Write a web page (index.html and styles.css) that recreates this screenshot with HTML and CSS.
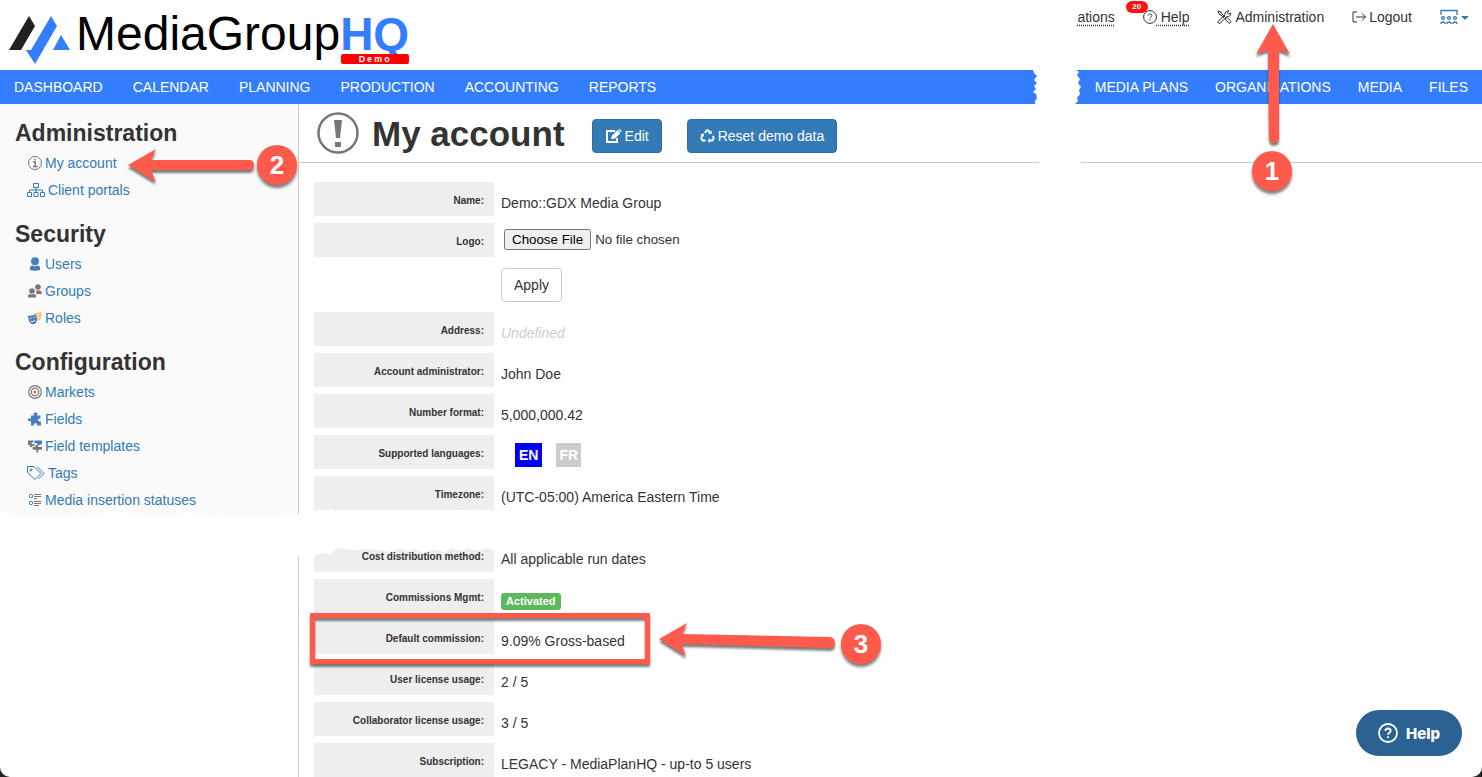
FILE: index.html
```html
<!DOCTYPE html>
<html lang="en">
<head>
  <meta charset="UTF-8">
  <meta name="viewport" content="width=device-width, initial-scale=1.0">
  <title>MediaGroupHQ | My account</title>
  <link rel="stylesheet" href="styles.css">
</head>
<body>
<div class="page">

<header class="top">
  <a href="#" class="logo">
    <svg width="62" height="50" viewBox="0 0 62 50">
      <path d="M0 35 L20 1 L26 11 L12 35Z" fill="#231f20"/>
      <path d="M17 35 L22 35 L42 1 L48 11 L26 49Z" fill="#347dff"/>
      <path d="M44 35 L52 20 L61 35Z" fill="#347dff"/>
    </svg>
    <span class="logo-text">MediaGroup</span>
    <span class="logo-hq">HQ<span class="logo-demo">Demo</span></span>
  </a>
  <nav class="user-nav">
    <a href="#" class="dotted">ations</a>
    <a href="#" class="help-link">
      <span class="count">20</span>
      <svg width="14" height="14" viewBox="0 0 14 14" fill="none" stroke="#333"><circle cx="7" cy="7" r="6.4"/><path d="M5.2 5.6C5.2 3.4 8.9 3.4 8.9 5.5C8.9 6.9 7 6.8 7 8.3M7 9.4V10.6"/></svg><span class="dotted">&nbsp;Help</span>
    </a>
    <a href="#">
      <svg width="15" height="14" viewBox="0 0 15 14" fill="none" stroke="#333"><path d="M1 1L4 2L5 4L8 7M1 1L2 4L4 5L7 8M8.5 8L10 7.500L14 11.500L12.500 13.400L8.500 10Z"/><path d="M1 11.500L8 5C7.500 2 9.500.6 12 1L10.300 2.800L11.500 4.200L13.800 3C14.300 5.500 12 7.200 9.800 6.500L3 13.300C1.500 13.700.5 12.700 1 11.500Z"/></svg>
      Administration
    </a>
    <a href="#">
      <svg width="14" height="14" viewBox="0 0 14 14" fill="none" stroke="#333"><path d="M5 2H1V12H5M4 7H13.500M10 3.500L13.500 7L10 10.500"/></svg>
      Logout
    </a>
    <a href="#" aria-label="Switch account">
      <svg width="30" height="16" viewBox="0 0 30 16" fill="none" stroke="#337ab7" stroke-width="1.300"><path d="M1 6V1.500H17V6"/><circle cx="3" cy="9" r="1.400"/><circle cx="9" cy="9" r="1.400"/><circle cx="15" cy="9" r="1.400"/><path d="M1 15V14Q3 12 5 14V15M7 15V14Q9 12 11 14V15M13 15V14Q15 12 17 14V15"/><path d="M21 7H29L25 11Z" fill="#337ab7" stroke="none"/></svg>
    </a>
  </nav>
</header>

<nav class="main-nav">
  <div class="nav-left">
    <a href="#">DASHBOARD</a>
    <a href="#">CALENDAR</a>
    <a href="#">PLANNING</a>
    <a href="#">PRODUCTION</a>
    <a href="#">ACCOUNTING</a>
    <a href="#">REPORTS</a>
  </div>
  <div class="nav-right">
    <a href="#">MEDIA PLANS</a>
    <a href="#">ORGANISATIONS</a>
    <a href="#">MEDIA</a>
    <a href="#">FILES</a>
  </div>
</nav>

<div class="layout">
  <aside class="sidebar">
    <div class="menu">
      <h2>Administration</h2>
      <ul>
        <li><a href="#"><svg width="14" height="14" viewBox="0 0 14 14" fill="none" stroke="#777"><circle cx="7" cy="7" r="6.500"/><path d="M5 6H7.300V10.500M5 10.500H9.500" stroke-width="1.400"/><path d="M6.200 3.500H7.800" stroke-width="1.600"/></svg>My account</a></li>
        <li><a href="#" class="wide"><svg width="18" height="14" viewBox="0 0 18 14" fill="none" stroke="#337ab7"><path d="M6.500.5H11.500V4.500H6.500ZM.5 9.500H4.500V13.500H.5ZM7 9.500H11V13.500H7ZM13.500 9.500H17.500V13.500H13.500ZM9 4.500V9.500M2.500 9.500V7H15.500V9.500"/></svg>Client portals</a></li>
      </ul>
      <h2>Security</h2>
      <ul>
        <li><a href="#"><svg width="14" height="14" viewBox="0 0 14 14" fill="#4a7ebb"><circle cx="7" cy="4.200" r="4"/><path d="M2 13V11Q2 8.500 4.500 8.500Q7 10 9.500 8.500Q12 8.500 12 11V13Q7 14.500 2 13Z"/></svg>Users</a></li>
        <li><a href="#"><svg width="14" height="14" viewBox="0 0 14 14" fill="#777"><circle cx="10" cy="3" r="2.800"/><path d="M8 6.500H12Q14 7 14 10H8.500Z"/><circle cx="4" cy="7" r="2.800"/><path d="M0 13.500V12Q0 10 2 10Q4 11 6 10Q8 10 8 12V13.500Z"/></svg>Groups</a></li>
        <li><a href="#"><svg width="14" height="14" viewBox="0 0 14 14"><path d="M6 2Q10 3 13.500.5Q14.500 6 11 10L7 8Z" fill="#efc77b"/><path d="M9 4.500H10.500M11.500 3.500L12.500 3M9.500 7.500L12 6" stroke="#fff" fill="none"/><path d="M0 4.500Q4 5 7.500 3.500Q10 8 8 12Q4 15 1.500 11Q0 8 0 4.500Z" fill="#4a7ebb"/><path d="M2 7L3.500 7.500M5.500 6.500L7 6M3 10.500Q6 11.500 7 9" stroke="#fff" fill="none"/></svg>Roles</a></li>
      </ul>
      <h2>Configuration</h2>
      <ul>
        <li><a href="#"><svg width="14" height="14" viewBox="0 0 14 14" fill="none" stroke="#777" stroke-width="1.200"><circle cx="7" cy="7" r="6.300"/><circle cx="7" cy="7" r="3.800"/><circle cx="7" cy="7" r="1.500" fill="#e66" stroke="none"/></svg>Markets</a></li>
        <li><a href="#"><svg width="14" height="14" viewBox="0 0 14 14" fill="#4a7ebb"><path d="M3 3.500H6Q4.500.5 7.500.5Q10.500.5 9 3.500H12.500V6.500Q10 6 10 8Q10 10 13 9.500V13.500H9Q9.500 11 7.500 11Q5.500 11 6 13.500H3V9Q0 10 0 7.500Q0 5.500 3 6.500Z"/></svg>Fields</a></li>
        <li><a href="#"><svg width="14" height="14" viewBox="0 0 15 14"><path d="M0 1H6V3H4V5H7V7H4.500V8H2V6H0Z" fill="#777"/><path d="M7 1H15V5H13V6H10V4H7Z" fill="#4a7ebb"/><path d="M5 8H8V6H11V8H15V11H11V14H9V11H5Z" fill="#777"/></svg>Field templates</a></li>
        <li><a href="#" class="wide"><svg width="18" height="14" viewBox="0 0 18 14" fill="none" stroke="#337ab7"><path d="M.5.5H7L14 7.500L8 13.500L.5 6.500ZM10 .8L17 7.500L11.500 13"/><circle cx="4" cy="4" r="1"/></svg>Tags</a></li>
        <li><a href="#"><svg width="14" height="14" viewBox="0 0 14 14" fill="none"><circle cx="3" cy="3" r="1.700" stroke="#4a7ebb"/><circle cx="3" cy="10" r="1.700" stroke="#4a7ebb"/><path d="M6 1.500H13M6 3.500H13M6 5.500H9M6 8.500H13M6 10.500H13M6 12.500H11" stroke="#777"/></svg>Media insertion statuses</a></li>
      </ul>
    </div>
  </aside>

  <main class="content">
    <div class="title-bar">
      <svg width="42" height="42" viewBox="0 0 42 42"><circle cx="21" cy="21" r="19.500" fill="none" stroke="#777" stroke-width="2.500"/><path d="M17 8H25L23 26H19Z" fill="#777"/><path d="M18 30H24V35H18Z" fill="#777"/></svg>
      <h1>My account</h1>
      <button class="btn primary"><svg width="17" height="14" viewBox="0 0 17 14" fill="none" stroke="#fff" stroke-width="2"><path d="M10 2H2V13H12V9"/><path d="M6 10L7 6.500L12.500 1L15.500 4L10 9.500Z" fill="#fff" stroke="none"/><path d="M13.300.5L14.500 0L16.500 2L16 3.300Z" fill="#fff" stroke="none"/></svg>Edit</button>
      <button class="btn primary"><svg width="15" height="14" viewBox="0 0 15 14" fill="none" stroke="#fff" stroke-width="1.800"><path d="M5 4L6.500 1.500H8.500L10 4M2.500 6L1.200 9L2.500 11.500H5.500M9 11.500H12.500L13.800 9L12.800 7"/><path d="M8 4.500L11.500 5L12 1.500ZM4 7.500L3.500 4L.3 6ZM10 9V14L7.500 11.500Z" fill="#fff" stroke="none"/></svg>Reset demo data</button>
    </div>

    <dl class="details">
      <div class="row"><dt>Name:</dt><dd>Demo::GDX Media Group</dd></div>
      <div class="row">
        <dt><label for="logo">Logo:</label></dt>
        <dd class="upload">
          <input type="file" id="logo">
          <button class="btn">Apply</button>
        </dd>
      </div>
      <div class="row"><dt>Address:</dt><dd class="undefined">Undefined</dd></div>
      <div class="row"><dt>Account administrator:</dt><dd>John Doe</dd></div>
      <div class="row"><dt>Number format:</dt><dd>5,000,000.42</dd></div>
      <div class="row"><dt>Supported languages:</dt><dd class="langs"><span class="lang on">EN</span><span class="lang">FR</span></dd></div>
      <div class="row"><dt>Timezone:</dt><dd>(UTC-05:00) America Eastern Time</dd></div>
    </dl>
    <dl class="details">
      <div class="row"><dt>Cost distribution method:</dt><dd>All applicable run dates</dd></div>
      <div class="row"><dt>Commissions Mgmt:</dt><dd><span class="badge">Activated</span></dd></div>
      <div class="row marked"><dt>Default commission:</dt><dd>9.09% Gross-based</dd></div>
      <div class="row"><dt>User license usage:</dt><dd>2 / 5</dd></div>
      <div class="row"><dt>Collaborator license usage:</dt><dd>3 / 5</dd></div>
      <div class="row"><dt>Subscription:</dt><dd>LEGACY - MediaPlanHQ - up-to 5 users</dd></div>
    </dl>
  </main>
</div>

<!-- torn paper edges -->
<svg class="tear tear-v" width="52" height="170" viewBox="0 0 52 170" fill="#fff">
  <path d="M9 0H46V70L49 72L47 75L50 79L48 83L51 87L49 90L50 94L47 98L48 101L45 104H51V170H9V104H5V101L7 98L6 94L3 92L6 89L4 86L7 83L4 80L7 76L4 73L3 70H9Z"/>
</svg>
<svg class="tear tear-h" width="700" height="56" viewBox="0 0 700 56" fill="#fff">
  <path d="M0 8L6 6L12 10L20 12L34 11L40 13L52 10L64 13L78 9L86 11L96 9L108 7L120 6L132 8L142 9L152 11L162 10L172 12L180 8L190 6L198 9L210 11L224 9L234 12L246 10L258 12L270 11L280 10L290 8L300 8H316L326 5L329 4L331 2L334 5H456L459 3L462 5L473 5L476 3L480 5H700V40H500L494 44L486 42L478 45L468 42L462 45L452 42L444 46L434 43L424 47L414 43L408 46L400 42L392 46L380 44L368 43L352 44L340 42L334 44L332 49L322 47L314 50L300 51H0Z"/>
</svg>

<!-- callouts -->
<svg class="arrow arrow-1" width="40" height="126" viewBox="0 0 40 126" fill="#ff5a4c"><path d="M20 1L37 31L26 27L26 115Q26 120 21 120Q16 120 16 115L15 27L3 31Z"/></svg>
<span class="step step-1">1</span>
<svg class="arrow arrow-2" width="130" height="40" viewBox="0 0 130 40" fill="#ff5a4c"><path d="M1 17L29 1L24 12H122Q127 12 127 17Q127 22 122 22H24L29 34Z"/></svg>
<span class="step step-2">2</span>
<svg class="arrow arrow-3" width="180" height="40" viewBox="0 0 180 40" fill="#ff5a4c"><path d="M1 17L29 1L24 12L172 15Q177 16 177 21Q177 26 172 26L24 22L28 34Z"/></svg>
<span class="step step-3">3</span>

<button class="help-btn"><svg width="20" height="20" viewBox="0 0 20 20" fill="none" stroke="#fff" stroke-width="1.800"><circle cx="10" cy="10" r="9"/><path d="M7.300 8C7.300 4.700 12.700 4.700 12.700 7.800C12.700 9.700 10 9.700 10 11.700M10 13.200V15"/></svg>Help</button>

</div>
</body>
</html>
```
FILE: styles.css
```css
*, *::after {
  box-sizing: border-box;
}

html {
  background-color: #222;
}

body {
  margin: 0;
  font-family: "Helvetica Neue", "Liberation Sans", Arial, sans-serif;
  font-size: 14px;
  line-height: 20px;
  color: #333;
}

.page {
  position: relative;
  min-height: 100vh;
  background-color: #fff;
  border-radius: 0 0 10px 10px;
  overflow: hidden;
}

a {
  color: #337ab7;
  text-decoration: none;
}

h1, h2, ul, dl, dd {
  margin: 0;
  padding: 0;
}

/* Header */
.top {
  display: flex;
  justify-content: space-between;
  align-items: flex-start;
  height: 70px;
  padding: 7px 12px 0 9px;
}

.logo {
  display: flex;
  align-items: flex-start;
  color: #000;
  font-size: 48px;
  line-height: 54px;
}

.logo svg {
  margin: 8px 5px 0 0;
}

.logo-hq {
  position: relative;
  color: #347dff;
  font-size: 46px;
  font-weight: bold;
}

.logo-demo {
  position: absolute;
  top: 47px;
  left: 1px;
  width: 68px;
  background-color: #f00;
  border-radius: 2px;
  color: #fff;
  font-size: 9px;
  line-height: 10px;
  letter-spacing: 2px;
  text-align: center;
}

.user-nav {
  display: flex;
  gap: 28px;
}

.user-nav a {
  position: relative;
  display: flex;
  align-items: center;
  gap: 3px;
  height: 20px;
  color: #333;
}

.user-nav .help-link {
  gap: 0;
}

.user-nav .dotted {
  text-decoration: underline dotted;
  text-underline-offset: 3px;
}

.count {
  position: absolute;
  top: -6px;
  left: -17px;
  width: 22px;
  border-radius: 6px;
  background-color: #f11;
  color: #fff;
  font-size: 8px;
  font-weight: bold;
  line-height: 12px;
  text-align: center;
}

/* Blue bar */
.main-nav {
  display: flex;
  justify-content: space-between;
  padding: 7px 14px;
  background-color: #347dff;
}

.main-nav a {
  color: #fff;
}

.nav-left {
  display: flex;
  gap: 30px;
}

.nav-right {
  display: flex;
  gap: 27px;
}

/* Sidebar */
.layout {
  display: flex;
}

.sidebar {
  width: 299px;
  flex-shrink: 0;
  border-right: 1px solid #ccc;
}

.menu {
  padding: 16px 15px 4px;
  background-color: #fafafa;
}

.menu h2 {
  margin-bottom: 3px;
  font-size: 23px;
  line-height: 26px;
}

.menu ul {
  margin-bottom: 18px;
  padding-left: 13px;
  list-style: none;
}

.menu ul:last-child {
  margin-bottom: 0;
}

.menu a {
  display: flex;
  align-items: center;
  gap: 3px;
  height: 27px;
}

.menu .wide {
  margin-left: -1px;
}

/* Content */
.content {
  flex: 1;
}

.title-bar {
  display: flex;
  align-items: center;
  height: 59px;
  padding-left: 18px;
  border-bottom: 1px solid #ccc;
}

.title-bar h1 {
  margin: 2px 2px 0 13px;
  font-size: 35px;
  line-height: 40px;
}

.btn {
  display: flex;
  align-items: center;
  gap: 3px;
  height: 34px;
  padding: 0 12px;
  background-color: #fff;
  border: 1px solid #ccc;
  border-radius: 4px;
  color: #333;
  font: inherit;
  cursor: pointer;
}

.btn.primary {
  margin: 6px 0 0 25px;
  background-color: #337ab7;
  border-color: #2e6da4;
  color: #fff;
}

.details {
  display: flex;
  flex-direction: column;
  gap: 7px;
  padding: 19px 15px 0;
}

.details + .details {
  padding-top: 28px;
}

.row {
  position: relative;
  display: flex;
  align-items: flex-start;
  gap: 7px;
}

.row dt {
  width: 180px;
  height: 34px;
  padding: 9px 10px 0;
  background-color: #eee;
  font-size: 10px;
  font-weight: bold;
  text-align: right;
}

.row dd {
  padding-top: 11px;
}

.row .upload {
  display: flex;
  flex-direction: column;
  align-items: flex-start;
  gap: 18px;
  padding: 6px 0 3px;
}

.upload input {
  margin-left: 3px;
  font-family: inherit;
}

.undefined {
  color: #ccc;
  font-style: italic;
}

.row .langs {
  display: flex;
  gap: 14px;
  padding: 8px 0 0 14px;
}

.lang {
  padding: 2px 3px;
  background-color: #ccc;
  color: #fff;
  font-weight: bold;
}

.lang.on {
  padding: 2px 4px;
  background-color: #00f;
}

.badge {
  display: block;
  margin-top: 3px;
  padding: 0 5px;
  background-color: #5cb85c;
  border-radius: 3px;
  color: #fff;
  font-size: 11px;
  font-weight: bold;
  line-height: 17px;
}

/* Red frame round the row */
.marked::after {
  content: "";
  position: absolute;
  top: -7px;
  left: -4px;
  width: 340px;
  height: 51px;
  border: 5px solid #ff5a4c;
  filter: drop-shadow(0 3px 1px rgba(0, 0, 0, 0.5));
  z-index: 1;
}

/* Torn edges */
.tear {
  position: absolute;
}

.tear-v {
  top: 0;
  right: 400px;
}

.tear-h {
  top: 506px;
  left: 0;
}

/* Callouts */
.arrow {
  position: absolute;
  filter: drop-shadow(0 3px 1px rgba(0, 0, 0, 0.5));
}

.arrow-1 {
  top: 23px;
  right: 189px;
}

.arrow-2 {
  top: 148px;
  left: 127px;
}

.arrow-3 {
  top: 622px;
  left: 658px;
}

.step {
  position: absolute;
  width: 40px;
  height: 40px;
  border-radius: 50%;
  background-color: #ff5a4c;
  box-shadow: 0 3px 3px rgba(0, 0, 0, 0.5);
  color: #fff;
  font-size: 26px;
  font-weight: bold;
  line-height: 40px;
  text-align: center;
}

.step-1 {
  top: 151px;
  right: 190px;
}

.step-2 {
  top: 145px;
  left: 257px;
}

.step-3 {
  top: 624px;
  left: 841px;
}

.help-btn {
  position: fixed;
  right: 20px;
  bottom: 21px;
  display: flex;
  align-items: center;
  gap: 8px;
  height: 46px;
  padding: 0 22px;
  background-color: #2a6293;
  border: none;
  border-radius: 23px;
  color: #fff;
  font-family: Inter, sans-serif;
  font-size: 15px;
  font-weight: 800;
  cursor: pointer;
}
```
